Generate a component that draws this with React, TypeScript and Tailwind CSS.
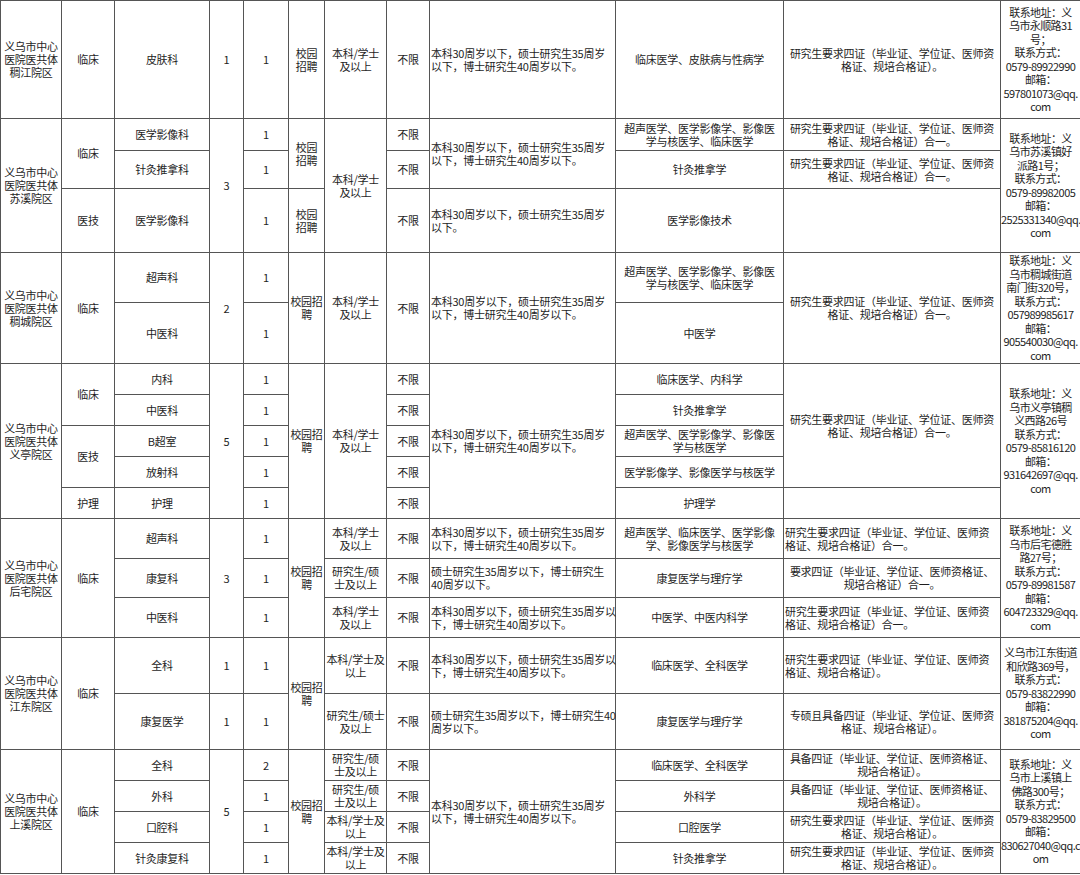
type Cell = { t?: string; rs?: number; left?: boolean; contact?: boolean };

const A = (n: string) => `义乌市中心\n医院医共体\n${n}`;
const BK = "本科/学士\n及以上";
const BK2 = "本科/学士及\n以上";
const YJ = "研究生/硕\n士及以上";
const I1 = "本科30周岁以下，硕士研究生35周岁\n以下，博士研究生40周岁以下。";
const I2 = "本科30周岁以下，硕士研究生35周岁以\n下，博士研究生40周岁以下。";
const K1 = "研究生要求四证（毕业证、学位证、医师资\n格证、规培合格证）。";
const K2 = "研究生要求四证（毕业证、学位证、医师资\n格证、规培合格证）合一。";
const JB = "具备四证（毕业证、学位证、医师资格证、\n规培合格证）。";
const CS = "超声医学、医学影像学、影像医\n学与核医学、临床医学";

const colWidths = [
  "w-[61px]",
  "w-[53px]",
  "w-[95px]",
  "w-[34px]",
  "w-[45px]",
  "w-[36px]",
  "w-[62px]",
  "w-[43px]",
  "w-[186px]",
  "w-[168px]",
  "w-[217px]",
  "w-[80px]",
];

// each block: row heights + rows of cells (spanned cells are omitted)
const blocks: { h: string[]; rows: Cell[][] }[] = [
  {
    h: ["h-[118px]"],
    rows: [
      [
        { t: A("稠江院区") },
        { t: "临床" },
        { t: "皮肤科" },
        { t: "1" },
        { t: "1" },
        { t: "校园\n招聘" },
        { t: BK },
        { t: "不限" },
        { t: I1, left: true },
        { t: "临床医学、皮肤病与性病学" },
        { t: K1 },
        { t: "联系地址：义\n乌市永顺路31\n号；\n联系方式：\n0579-89922990\n邮箱：\n597801073@qq.\ncom", contact: true },
      ],
    ],
  },
  {
    h: ["h-[32px]", "h-[38px]", "h-[64px]"],
    rows: [
      [
        { t: A("苏溪院区"), rs: 3 },
        { t: "临床", rs: 2 },
        { t: "医学影像科" },
        { t: "3", rs: 3 },
        { t: "1" },
        { t: "校园\n招聘", rs: 2 },
        { t: BK, rs: 3 },
        { t: "不限" },
        { t: I1, left: true, rs: 2 },
        { t: CS },
        { t: K2 },
        { t: "联系地址：义\n乌市苏溪镇好\n派路1号；\n联系方式：\n0579-89982005\n邮箱：\n2525331340@qq.\ncom", rs: 3, contact: true },
      ],
      [{ t: "针灸推拿科" }, { t: "1" }, { t: "不限" }, { t: "针灸推拿学" }, { t: K2 }],
      [
        { t: "医技" },
        { t: "医学影像科" },
        { t: "1" },
        { t: "校园\n招聘" },
        { t: "不限" },
        { t: "本科30周岁以下，硕士研究生35周岁\n以下。", left: true },
        { t: "医学影像技术" },
        { t: "" },
      ],
    ],
  },
  {
    h: ["h-[50px]", "h-[61px]"],
    rows: [
      [
        { t: A("稠城院区"), rs: 2 },
        { t: "临床", rs: 2 },
        { t: "超声科" },
        { t: "2", rs: 2 },
        { t: "1" },
        { t: "校园招\n聘", rs: 2 },
        { t: BK, rs: 2 },
        { t: "不限", rs: 2 },
        { t: I1, left: true, rs: 2 },
        { t: CS },
        { t: K2, rs: 2 },
        { t: "联系地址：义\n乌市稠城街道\n南门街320号，\n联系方式：\n057989985617\n邮箱：\n905540030@qq.\ncom", rs: 2, contact: true },
      ],
      [{ t: "中医科" }, { t: "1" }, { t: "中医学" }],
    ],
  },
  {
    h: ["h-[31px]", "h-[31px]", "h-[31px]", "h-[31px]", "h-[31px]"],
    rows: [
      [
        { t: A("义亭院区"), rs: 5 },
        { t: "临床", rs: 2 },
        { t: "内科" },
        { t: "5", rs: 5 },
        { t: "1" },
        { t: "校园招\n聘", rs: 5 },
        { t: BK, rs: 5 },
        { t: "不限" },
        { t: I1, left: true, rs: 5 },
        { t: "临床医学、内科学" },
        { t: K2, rs: 4 },
        { t: "联系地址：义\n乌市义亭镇稠\n义西路26号\n联系方式：\n0579-85816120\n邮箱：\n931642697@qq.\ncom", rs: 5, contact: true },
      ],
      [{ t: "中医科" }, { t: "1" }, { t: "不限" }, { t: "针灸推拿学" }],
      [
        { t: "医技", rs: 2 },
        { t: "B超室" },
        { t: "1" },
        { t: "不限" },
        { t: "超声医学、医学影像学、影像医\n学与核医学" },
      ],
      [{ t: "放射科" }, { t: "1" }, { t: "不限" }, { t: "医学影像学、影像医学与核医学" }],
      [{ t: "护理" }, { t: "护理" }, { t: "1" }, { t: "不限" }, { t: "护理学" }, { t: "" }],
    ],
  },
  {
    h: ["h-[40px]", "h-[39px]", "h-[40px]"],
    rows: [
      [
        { t: A("后宅院区"), rs: 3 },
        { t: "临床", rs: 3 },
        { t: "超声科" },
        { t: "3", rs: 3 },
        { t: "1" },
        { t: "校园招\n聘", rs: 3 },
        { t: BK },
        { t: "不限" },
        { t: I1, left: true },
        { t: "超声医学、临床医学、医学影像\n学、影像医学与核医学" },
        { t: K2, left: true },
        { t: "联系地址：义\n乌市后宅德胜\n路27号；\n联系方式：\n0579-89981587\n邮箱：\n604723329@qq.\ncom", rs: 3, contact: true },
      ],
      [
        { t: "康复科" },
        { t: "1" },
        { t: YJ },
        { t: "不限" },
        { t: "硕士研究生35周岁以下，博士研究生\n40周岁以下。", left: true },
        { t: "康复医学与理疗学" },
        { t: "要求四证（毕业证、学位证、医师资格证、\n规培合格证）合一。" },
      ],
      [
        { t: "中医科" },
        { t: "1" },
        { t: BK },
        { t: "不限" },
        { t: I2, left: true },
        { t: "中医学、中医内科学" },
        { t: K2, left: true },
      ],
    ],
  },
  {
    h: ["h-[56px]", "h-[56px]"],
    rows: [
      [
        { t: A("江东院区"), rs: 2 },
        { t: "临床", rs: 2 },
        { t: "全科" },
        { t: "1" },
        { t: "1" },
        { t: "校园招\n聘", rs: 2 },
        { t: BK2 },
        { t: "不限" },
        { t: I2, left: true },
        { t: "临床医学、全科医学" },
        { t: K1, left: true },
        { t: "义乌市江东街道\n和欣路369号，\n联系方式：\n0579-83822990\n邮箱：\n381875204@qq.\ncom", rs: 2, contact: true },
      ],
      [
        { t: "康复医学" },
        { t: "1" },
        { t: "1" },
        { t: "研究生/硕士\n及以上" },
        { t: "不限" },
        { t: "硕士研究生35周岁以下，博士研究生40\n周岁以下。", left: true },
        { t: "康复医学与理疗学" },
        { t: "专硕且具备四证（毕业证、学位证、医师资\n格证、规培合格证）。" },
      ],
    ],
  },
  {
    h: ["h-[31px]", "h-[31px]", "h-[31px]", "h-[31px]"],
    rows: [
      [
        { t: A("上溪院区"), rs: 4 },
        { t: "临床", rs: 4 },
        { t: "全科" },
        { t: "5", rs: 4 },
        { t: "2" },
        { t: "校园招\n聘", rs: 4 },
        { t: YJ },
        { t: "不限" },
        { t: I1, left: true, rs: 4 },
        { t: "临床医学、全科医学" },
        { t: JB },
        { t: "联系地址：义\n乌市上溪镇上\n佛路300号；\n联系方式：\n0579-83829500\n邮箱：\n830627040@qq.c\nom", rs: 4, contact: true },
      ],
      [{ t: "外科" }, { t: "1" }, { t: YJ }, { t: "不限" }, { t: "外科学" }, { t: JB }],
      [{ t: "口腔科" }, { t: "1" }, { t: BK2 }, { t: "不限" }, { t: "口腔医学" }, { t: K1 }],
      [{ t: "针灸康复科" }, { t: "1" }, { t: BK2 }, { t: "不限" }, { t: "针灸推拿学" }, { t: K1 }],
    ],
  },
];

export default function App() {
  return (
    <div
      className="w-[1080px] h-[875px] overflow-hidden bg-white text-[#1e1e1e]"
      style={{ fontFamily: '"Noto Sans CJK SC", "Liberation Sans", sans-serif' }}
    >
      <table className="table-fixed border-collapse w-[1080px] text-[11px] leading-[13px]">
        <colgroup>
          {colWidths.map((w, i) => (
            <col key={i} className={w} />
          ))}
        </colgroup>
        <tbody>
          {blocks.map((b, bi) =>
            b.rows.map((row, ri) => (
              <tr key={`${bi}-${ri}`} className={b.h[ri]}>
                {row.map((c, ci) => (
                  <td
                    key={ci}
                    rowSpan={c.rs}
                    className={`border border-[#555] p-0 align-middle whitespace-pre ${
                      c.contact
                        ? "text-center tracking-[-0.6px] leading-[13.5px]"
                        : c.left
                          ? "text-left pl-[1px] tracking-[-0.25px]"
                          : "text-center tracking-[-0.25px]"
                    }`}
                  >
                    {c.t}
                  </td>
                ))}
              </tr>
            ))
          )}
        </tbody>
      </table>
    </div>
  );
}
